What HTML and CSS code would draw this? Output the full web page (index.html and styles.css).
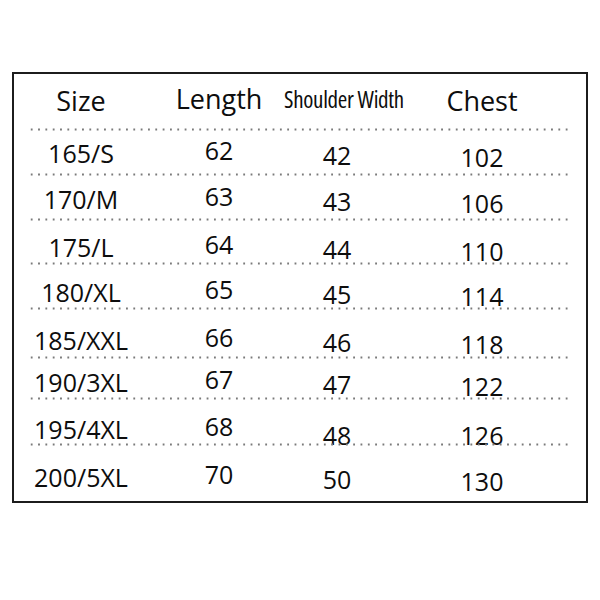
FILE: index.html
```html
<!DOCTYPE html>
<html lang="en">
<head>
<meta charset="utf-8">
<title>Size Chart</title>
<link rel="stylesheet" href="styles.css">
</head>
<body>
<div class="chart">
  <div class="row head">
    <div class="cell c1">Size</div>
    <div class="cell c2">Length</div>
    <div class="cell c3"><span class="narrow">Shoulder Width</span></div>
    <div class="cell c4">Chest</div>
  </div>
  <div class="sep"></div>
  <div class="row r1">
    <div class="cell c1">165/S</div>
    <div class="cell c2">62</div>
    <div class="cell c3">42</div>
    <div class="cell c4">102</div>
  </div>
  <div class="sep"></div>
  <div class="row r2">
    <div class="cell c1">170/M</div>
    <div class="cell c2">63</div>
    <div class="cell c3">43</div>
    <div class="cell c4">106</div>
  </div>
  <div class="sep"></div>
  <div class="row r3">
    <div class="cell c1">175/L</div>
    <div class="cell c2">64</div>
    <div class="cell c3">44</div>
    <div class="cell c4">110</div>
  </div>
  <div class="sep"></div>
  <div class="row r4">
    <div class="cell c1">180/XL</div>
    <div class="cell c2">65</div>
    <div class="cell c3">45</div>
    <div class="cell c4">114</div>
  </div>
  <div class="sep"></div>
  <div class="row r5">
    <div class="cell c1">185/XXL</div>
    <div class="cell c2">66</div>
    <div class="cell c3">46</div>
    <div class="cell c4">118</div>
  </div>
  <div class="sep"></div>
  <div class="row r6">
    <div class="cell c1">190/3XL</div>
    <div class="cell c2">67</div>
    <div class="cell c3">47</div>
    <div class="cell c4">122</div>
  </div>
  <div class="sep"></div>
  <div class="row r7">
    <div class="cell c1">195/4XL</div>
    <div class="cell c2">68</div>
    <div class="cell c3">48</div>
    <div class="cell c4">126</div>
  </div>
  <div class="sep"></div>
  <div class="row r8">
    <div class="cell c1">200/5XL</div>
    <div class="cell c2">70</div>
    <div class="cell c3">50</div>
    <div class="cell c4">130</div>
  </div>
</div>
</body>
</html>
```

FILE: styles.css
```css
html, body {
  margin: 0;
  padding: 0;
  background: #ffffff;
}

body {
  font-family: "Open Sans", "DejaVu Sans", sans-serif;
  color: #0d0d0d;
}

.chart {
  box-sizing: border-box;
  width: 576px;
  height: 431px;
  margin: 72px 0 0 12px;
  border: 2px solid #1c1c1c;
  display: flex;
  flex-direction: column;
}

.row {
  display: grid;
  grid-template-columns: 134px 142px 94px 196px;
  align-items: end;
  box-sizing: border-box;
  font-size: 25px;
  line-height: 25px;
  font-weight: 500;
}

.cell {
  display: flex;
  justify-content: center;
  white-space: nowrap;
}

.c2 { margin-bottom: 3px; }
.c3 { margin-bottom: -2px; }
.c4 { margin-bottom: -4px; }

.head {
  height: 54px;
  padding-bottom: 13px;
  font-size: 27px;
  line-height: 28px;
}

.head .c2 { margin-bottom: 2px; }
.head .c3 { margin-bottom: 2px; padding-left: 14px; }
.head .c4 { margin-bottom: 0; }

.narrow {
  font-size: 23px;
  font-stretch: 75%;
  letter-spacing: -0.3px;
}

.r1 { height: 42px; padding-bottom: 7px; }
.r2 { height: 42px; padding-bottom: 6px; }
.r3 { height: 41px; padding-bottom: 2px; }
.r4 { height: 42px; padding-bottom: 2px; }
.r5 { height: 46px; padding-bottom: 3px; }
.r6 { height: 38px; padding-bottom: 2px; }
.r7 { height: 43px; padding-bottom: 1px; }
.r8 { height: 55px; padding-bottom: 11px; }

.r7 .c3, .r7 .c4 { margin-bottom: -6px; }

.sep {
  height: 3px;
  margin: 0 14px;
  background-image: radial-gradient(circle at center, #7a7a7a 0, #7a7a7a 0.9px, transparent 1.3px);
  background-size: 7.33px 3px;
  background-repeat: repeat-x;
}
```
